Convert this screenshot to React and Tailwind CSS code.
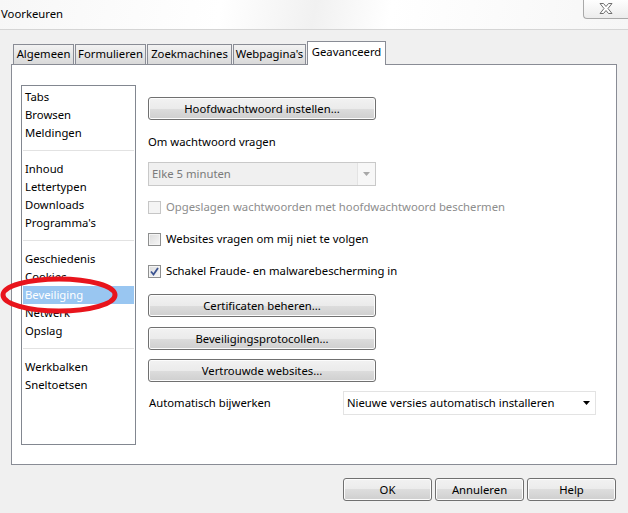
import React from "react"

const GROUPS = [
  ["Tabs", "Browsen", "Meldingen"],
  ["Inhoud", "Lettertypen", "Downloads", "Programma's"],
  ["Geschiedenis", "Cookies", "Beveiliging", "Netwerk", "Opslag"],
  ["Werkbalken", "Sneltoetsen"],
]

const TABS = [
  { label: "Algemeen", w: "w-[61px]" },
  { label: "Formulieren", w: "w-[71px]" },
  { label: "Zoekmachines", w: "w-[85px]" },
  { label: "Webpagina's", w: "w-[73px]" },
]

function Btn({ className = "", children }) {
  return (
    <button className={`h-[23px] rounded-[3px] border border-[#707070] bg-[linear-gradient(#f2f2f2,#ebebeb_50%,#dddddd_50%,#cfcfcf)] text-[11.3px] leading-none text-black shadow-[inset_0_0_0_1px_#fcfcfc] ${className}`}>
      {children}
    </button>
  )
}

function Check({ checked, disabled, children }) {
  return (
    <div className="flex h-[18px] items-center gap-[5px]">
      <div
        className={`flex h-[13px] w-[13px] items-center justify-center border ${
          disabled
            ? "border-[#c6c6c6] bg-[#f4f4f4]"
            : "border-[#8e8f8f] bg-[linear-gradient(135deg,#dcdcdc,#f6f6f6)] shadow-[inset_0_0_0_1px_#f4f4f4]"
        }`}
      >
        {checked && (
          <svg width="9" height="9" viewBox="0 0 9 9">
            <path d="M1 4.5 L3.5 7.5 L8 1" fill="none" stroke="#3c5491" strokeWidth="1.8" />
          </svg>
        )}
      </div>
      <span className={disabled ? "text-[#8d8d8d]" : "text-black"}>{children}</span>
    </div>
  )
}

export default function App() {
  return (
    <div className="relative h-[513px] w-[628px] overflow-hidden bg-[#f0f0f0] font-['Noto_Sans',sans-serif] text-[11.3px] text-black">

      {/* title bar */}
      <div className="relative flex h-[30px] items-center border-b border-[#d5d5d5] bg-[linear-gradient(100deg,#f7f7f7,#ffffff_35%,#f1f1f1_50%,#ffffff_62%,#f6f6f6)] pl-[1px]">
        <span>Voorkeuren</span>
        <div className="absolute right-0 top-[-1px] flex h-[20px] w-[45px] items-center justify-center rounded-bl-[4px] border-b border-l border-[#a9a9a9] bg-[linear-gradient(#ffffff,#ececec)]">
          <svg width="14" height="11" viewBox="0 0 14 11">
            <path
              d="M1 0.5 H4.5 L7 3.5 L9.5 0.5 H13 L9 5.5 L13 10.5 H9.5 L7 7.5 L4.5 10.5 H1 L5 5.5 Z"
              fill="#ffffff"
              stroke="#6f6f6f"
              strokeWidth="1"
            />
          </svg>
        </div>
      </div>

      {/* tabs */}
      <div className="mt-[11px] flex h-[23px] items-end gap-[1px] pl-[13px]">
        {TABS.map(t => (
          <div
            key={t.label}
            className={`${t.w} flex h-[20px] items-center justify-center border border-b-0 border-[#898c95] bg-[linear-gradient(#f2f2f2,#e6e6e6_50%,#d9d9d9)]`}
          >
            {t.label}
          </div>
        ))}
        <div className="relative z-10 -mb-px flex h-[24px] w-[79px] items-start justify-center border border-b-0 border-[#898c95] bg-white pt-[2px]">
          Geavanceerd
        </div>
      </div>

      {/* panel */}
      <div className="mx-[11px] flex h-[401px] border border-[#898c95] bg-white">
        {/* sidebar list */}
        <div className="ml-[9px] mt-[20px] h-[360px] w-[115px] border border-[#828790] bg-white pt-[2px]">
          {GROUPS.map((group, gi) => (
            <div key={gi}>
              {gi > 0 && <div className="mx-px mb-[9px] mt-[8px] h-px bg-[#e2e2e2]" />}
              {group.map(item =>
                item === "Beveiliging" ? (
                  <div key={item} className="mx-px flex h-[18px] items-center bg-[#99c6f1] pl-[2px] text-white">
                    {item}
                  </div>
                ) : (
                  <div key={item} className="flex h-[18px] items-center pl-[3px]">
                    {item}
                  </div>
                )
              )}
            </div>
          ))}
        </div>

        {/* settings */}
        <div className="ml-[12px] mt-[32px] flex w-[448px] flex-col">
          <Btn className="w-[228px]">Hoofdwachtwoord instellen...</Btn>
          <div className="mt-[13px] flex h-[18px] items-center">Om wachtwoord vragen</div>
          <div className="mt-[11px] flex h-[24px] w-[228px] items-center border border-[#c9c9c9] bg-[#f0f0f0]">
            <span className="flex-1 pl-[3px] text-[#7a7a7a]">Elke 5 minuten</span>
            <div className="flex h-full w-[18px] items-center justify-center border-l border-[#e3e3e3] bg-[#f7f7f7]">
              <svg width="7" height="4" viewBox="0 0 7 4">
                <path d="M0 0 H7 L3.5 4 Z" fill="#a8a8a8" />
              </svg>
            </div>
          </div>
          <div className="mt-[12px] flex flex-col gap-[14px]">
            <Check disabled>Opgeslagen wachtwoorden met hoofdwachtwoord beschermen</Check>
            <Check>Websites vragen om mij niet te volgen</Check>
            <Check checked>Schakel Fraude- en malwarebescherming in</Check>
          </div>
          <Btn className="mt-[14px] w-[228px]">Certificaten beheren...</Btn>
          <Btn className="mt-[10px] w-[228px]">Beveiligingsprotocollen...</Btn>
          <Btn className="mt-[9px] w-[228px]">Vertrouwde websites...</Btn>
          <div className="mt-[9px] flex items-center">
            <span className="w-[195px] pl-px">Automatisch bijwerken</span>
            <div className="flex h-[24px] w-[253px] items-center border border-[#e3e3e3] bg-white">
              <span className="flex-1 pl-[3px]">Nieuwe versies automatisch installeren</span>
              <div className="flex w-[18px] items-center justify-center">
                <svg width="7" height="4" viewBox="0 0 7 4">
                  <path d="M0 0 H7 L3.5 4 Z" fill="#000000" />
                </svg>
              </div>
            </div>
          </div>
        </div>
      </div>

      {/* dialog buttons */}
      <div className="mt-[13px] flex justify-end gap-[3px] pr-[12px]">
        <Btn className="w-[89px]">OK</Btn>
        <Btn className="w-[89px]">Annuleren</Btn>
        <Btn className="w-[89px]">Help</Btn>
      </div>

      {/* red annotation */}
      <svg className="pointer-events-none absolute left-0 top-[275px]" width="122" height="42" viewBox="0 0 122 42">
        <ellipse cx="59" cy="20" rx="56" ry="16" fill="none" stroke="#e8141c" strokeWidth="5" />
      </svg>
    </div>
  )
}
